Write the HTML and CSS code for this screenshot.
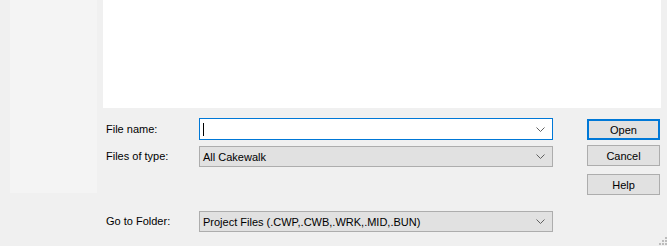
FILE: index.html
```html
<!DOCTYPE html>
<html lang="en">
<head>
    <meta charset="UTF-8">
    <meta name="viewport" content="width=device-width, initial-scale=1.0">
    <title>Open</title>
    <link rel="stylesheet" href="styles.css">
</head>
<body>
    <div class="dialog">
        <!-- places bar on the left -->
        <div class="places"></div>

        <div class="main">
            <div class="file-view"></div>

            <div class="form">
                <label class="label row1" for="fileName">File name:</label>
                <div class="combo edit row1">
                    <span class="caret"></span>
                    <svg class="chevron" width="9" height="5" viewBox="0 0 9 5"><path d="M0.5 0.5 L4.5 4.5 L8.5 0.5" fill="none" stroke="#606060" stroke-width="1"/></svg>
                </div>
                <button class="btn default row1">Open</button>

                <label class="label row2">Files of type:</label>
                <div class="combo row2">
                    <span class="value">All Cakewalk</span>
                    <svg class="chevron" width="9" height="5" viewBox="0 0 9 5"><path d="M0.5 0.5 L4.5 4.5 L8.5 0.5" fill="none" stroke="#606060" stroke-width="1"/></svg>
                </div>
                <button class="btn row2">Cancel</button>

                <button class="btn row3">Help</button>

                <label class="label row4">Go to Folder:</label>
                <div class="combo row4">
                    <span class="value">Project Files (.CWP,.CWB,.WRK,.MID,.BUN)</span>
                    <svg class="chevron" width="9" height="5" viewBox="0 0 9 5"><path d="M0.5 0.5 L4.5 4.5 L8.5 0.5" fill="none" stroke="#606060" stroke-width="1"/></svg>
                </div>
            </div>
        </div>
    </div>

    <svg class="grip" width="8" height="8" viewBox="0 0 8 8">
        <rect x="6" y="0" width="2" height="2" fill="#bcbcbc"/>
        <rect x="3" y="3" width="2" height="2" fill="#bcbcbc"/>
        <rect x="6" y="3" width="2" height="2" fill="#bcbcbc"/>
        <rect x="0" y="6" width="2" height="2" fill="#bcbcbc"/>
        <rect x="3" y="6" width="2" height="2" fill="#bcbcbc"/>
        <rect x="6" y="6" width="2" height="2" fill="#bcbcbc"/>
    </svg>
</body>
</html>
```

FILE: styles.css
```css
body {
    margin: 0;
    background-color: #f0f0f0;
    font-family: "Liberation Sans", Arial, sans-serif;
    font-size: 11px;
    color: #000;
    width: 667px;
    height: 246px;
    overflow: hidden;
    position: relative;
}

.dialog {
    display: flex;
}

.places {
    width: 87px;
    height: 193px;
    margin-left: 10px;
    background-color: #f4f4f4;
}

.main {
    width: 558px;
    margin-left: 6px;
}

.file-view {
    height: 108px;
    background-color: #fff;
}

/* label | control | spacer | buttons */
.form {
    display: grid;
    grid-template-columns: 94px 354px 34px 73px;
    grid-template-rows: 27px 29px 36px 22px;
    padding: 10px 0 0 2px;
}

.row1 { grid-row: 1; }
.row2 { grid-row: 2; }
.row3 { grid-row: 3; }
.row4 { grid-row: 4; }

.label {
    grid-column: 1;
    height: 22px;
    line-height: 22px;
    padding-left: 1px;
}

.combo {
    grid-column: 2;
    box-sizing: border-box;
    height: 21px;
    margin-top: 1px;
    display: flex;
    align-items: center;
    border: 1px solid #adadad;
    background-color: #e1e1e1;
    padding-left: 3px;
}

.combo.edit {
    height: 22px;
    margin-top: 0;
    border-color: #0078d7;
    background-color: #fff;
}

.caret {
    width: 1px;
    height: 13px;
    background-color: #000;
}

.value {
    flex: 1;
}

.chevron {
    margin-left: auto;
    margin-right: 7px;
}

.btn {
    grid-column: 4;
    box-sizing: border-box;
    height: 21px;
    padding: 0;
    border: 1px solid #adadad;
    background-color: #e1e1e1;
    font-family: inherit;
    font-size: 11px;
    color: #000;
}

.btn.row1 {
    margin-top: 1px;
}

.btn.default {
    border: 2px solid #0078d7;
}

.grip {
    position: absolute;
    right: 0;
    bottom: 1px;
}
```
